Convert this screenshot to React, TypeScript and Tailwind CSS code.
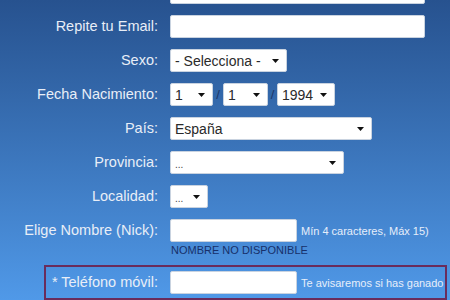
import React from "react";

const Arrow = () => (
  <svg width="7" height="4" viewBox="0 0 7 4" className="shrink-0">
    <path d="M0 0 L7 0 L3.5 4 Z" fill="#111" />
  </svg>
);

function Select({ w, text, small }: { w: string; text: string; small?: boolean }) {
  return (
    <div
      className={`${w} h-[23px] bg-white border border-[#c9d3e0] rounded-[2px] flex items-center justify-between pl-[4px] pr-[7px]`}
    >
      <span className={small ? "text-[10px] text-[#444] leading-none pt-[4px]" : "text-[14px] text-[#2a2a2a] leading-none"}>{text}</span>
      <Arrow />
    </div>
  );
}

function Row({ label, children }: { label: string; children: React.ReactNode }) {
  return (
    <div className="flex items-center h-[23px]">
      <div className="w-[158px] text-right text-[14.5px] text-[#e8eef7] leading-none">{label}</div>
      <div className="ml-[12px] flex items-center">{children}</div>
    </div>
  );
}

const Input = ({ w }: { w: string }) => (
  <div className={`${w} h-[23px] bg-white border border-[#c9d3e0] rounded-[2px]`} />
);

export default function App() {
  return (
    <div
      className="w-[450px] h-[300px] overflow-hidden bg-gradient-to-b from-[#27528f] to-[#5099e8]"
      style={{ fontFamily: '"Liberation Sans", Arial, sans-serif' }}
    >
      <div className="flex flex-col gap-[11px] -mt-[19px]">
        <Row label="">
          <Input w="w-[255px]" />
        </Row>
        <Row label="Repite tu Email:">
          <Input w="w-[255px]" />
        </Row>
        <Row label="Sexo:">
          <Select w="w-[117px]" text="- Selecciona -" />
        </Row>
        <Row label="Fecha Nacimiento:">
          <Select w="w-[43px]" text="1" />
          <span className="w-[10px] text-center text-[13px] text-[#1c3566]">/</span>
          <Select w="w-[45px]" text="1" />
          <span className="w-[9px] text-center text-[13px] text-[#1c3566]">/</span>
          <Select w="w-[58px]" text="1994" />
        </Row>
        <Row label="País:">
          <Select w="w-[202px]" text="España" />
        </Row>
        <Row label="Provincia:">
          <Select w="w-[174px]" text="..." small />
        </Row>
        <Row label="Localidad:">
          <Select w="w-[38px]" text="..." small />
        </Row>
        <Row label="Elige Nombre (Nick):">
          <Input w="w-[127px]" />
          <span className="ml-[4px] mt-[2px] text-[11px] text-[#e6eefa] whitespace-nowrap">Mín 4 caracteres, Máx 15)</span>
        </Row>
      </div>
      <div className="ml-[171px] mt-[3px] text-[11px] leading-none text-[#17306a]">NOMBRE NO DISPONIBLE</div>
      <div className="ml-[44px] mt-[9px] w-[403px] border-2 border-[#6a2c5c] py-[4px] flex items-center">
        <div className="w-[112px] text-right text-[14.5px] text-[#e8eef7] leading-none">* Teléfono móvil:</div>
        <div className="ml-[12px] flex items-center">
          <Input w="w-[127px]" />
          <span className="ml-[4px] mt-[2px] text-[11px] text-[#e6eefa] whitespace-nowrap">Te avisaremos si has ganado</span>
        </div>
      </div>
    </div>
  );
}
